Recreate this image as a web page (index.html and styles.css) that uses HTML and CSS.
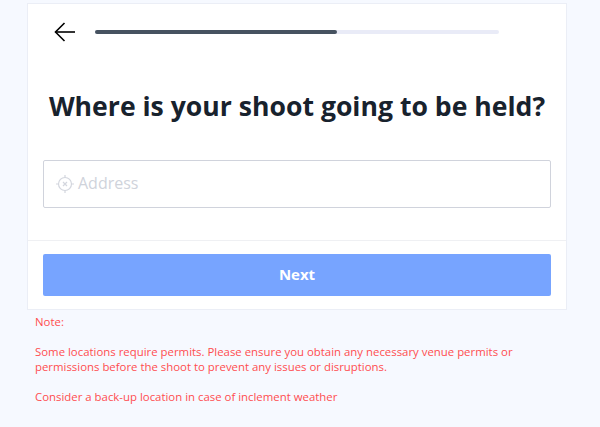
FILE: index.html
```html
<!DOCTYPE html>
<html lang="en">
  <head>
    <meta charset="UTF-8" />
    <title>Shoot location</title>
    <link rel="stylesheet" href="styles.css">
  </head>
  <body>
    <div class="container">
      <div class="card">
        <div class="top-bar">
          <svg class="back-icon" width="24" height="24" viewBox="0 0 24 24" fill="none" stroke="#000" stroke-width="1.6">
            <path d="M22 12H2.500" />
            <path d="M11.500 3L2.500 12l9 9" />
          </svg>
          <div class="progress"><div class="progress-fill"></div></div>
        </div>
        <h1>Where is your shoot going to be held?</h1>
        <div class="field">
          <svg class="field-icon" width="20" height="20" viewBox="0 0 20 20" fill="none" stroke="#d3d6de" stroke-width="1.2">
            <circle cx="10" cy="10" r="6.500" />
            <path d="M10 1v2.500M10 16.500V19M1 10h2.500M16.500 10H19" />
            <path d="M8 8l4 4M12 8l-4 4" />
          </svg>
          <span class="placeholder">Address</span>
        </div>
        <div class="footer">
          <button class="next-btn">Next</button>
        </div>
      </div>
      <div class="note">
        <p>Note:</p>
        <p>Some locations require permits. Please ensure you obtain any necessary venue permits or permissions before the shoot to prevent any issues or disruptions.</p>
        <p>Consider a back-up location in case of inclement weather</p>
      </div>
    </div>
  </body>
</html>
```
FILE: styles.css
```css
body {
  font-family: "Open Sans", sans-serif;
  margin: 0;
  background-color: #f6f9ff;
  color: #18222d;
}
.container {
  width: 540px;
  margin-left: 27px;
  padding-top: 3px;
}
.card {
  background-color: white;
  border: 1px solid #ebeef6;
  height: 307px;
  box-sizing: border-box;
}
.top-bar {
  display: flex;
  align-items: center;
  gap: 18px;
  padding: 16px 67px 0 25px;
}
.back-icon {
  flex-shrink: 0;
}
.progress {
  flex: 1;
  height: 4px;
  border-radius: 2px;
  background-color: #e9ebf7;
}
.progress-fill {
  width: 60%;
  height: 100%;
  border-radius: 2px;
  background-color: #465260;
}
h1 {
  margin: 43px 0 0;
  text-align: center;
  font-size: 26.600px;
  line-height: 38px;
  font-weight: 700;
}
.field {
  display: flex;
  align-items: center;
  gap: 3px;
  height: 48px;
  box-sizing: border-box;
  margin: 35px 15px 0;
  padding-left: 11px;
  border: 1px solid #d0d3dc;
  border-radius: 2px;
}
.placeholder {
  padding-bottom: 2px;
  font-size: 16px;
  color: #cfd3db;
}
.footer {
  margin-top: 32px;
  padding: 13px 15px 0;
  border-top: 1px solid #eff0f3;
}
.next-btn {
  display: block;
  width: 100%;
  height: 42px;
  padding: 0 0 2px;
  border: none;
  border-radius: 2px;
  background-color: #77a4ff;
  color: white;
  font-family: inherit;
  font-size: 15px;
  font-weight: 700;
}
.note {
  padding: 4px 8px 0;
  color: #ff4d4f;
  font-size: 11.400px;
  line-height: 15px;
}
.note p {
  margin: 0 0 15px;
}
```
